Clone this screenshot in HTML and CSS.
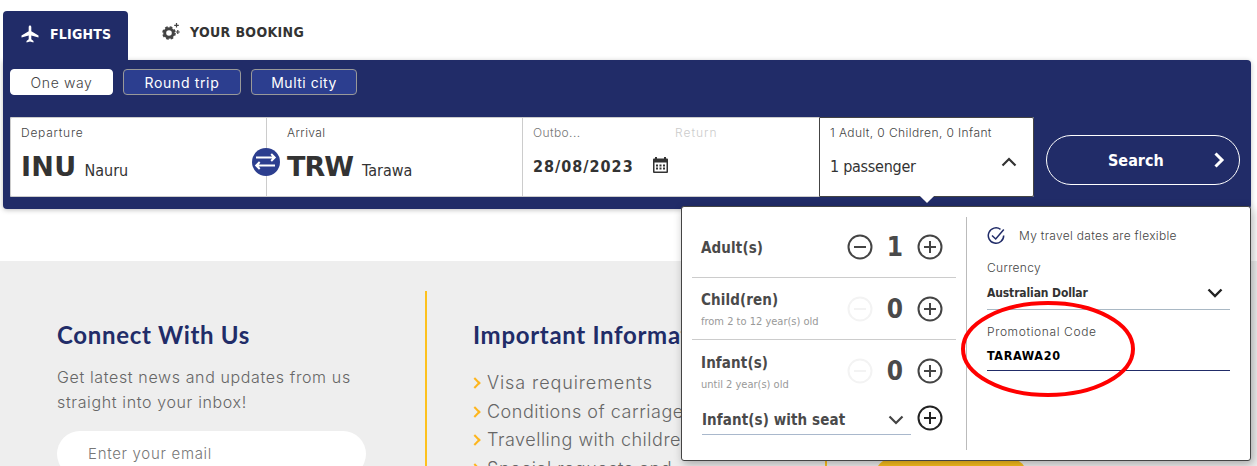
FILE: index.html
```html
<!DOCTYPE html>
<html lang="en">
<head>
    <meta charset="UTF-8">
    <meta name="viewport" content="width=device-width, initial-scale=1.0">
    <title>Book Flights</title>
    <link rel="stylesheet" href="styles.css">
</head>
<body>
    <!-- Booking widget -->
    <div class="booking">
        <nav class="tabs">
            <a class="tab active" href="#flights">
                <svg width="18" height="18" viewBox="0 0 18 18"><path d="M9 .5c.8 0 1.300.7 1.300 1.500V6.300L17.500 10.500v2L10.300 10.500V14.200l2.200 1.700V17.500L9 16.400l-3.500 1.100V15.900l2.200-1.700V10.500L.5 12.500v-2L7.700 6.300V2C7.700 1.200 8.200.5 9 .5z" fill="#fff"/></svg>
                <span>FLIGHTS</span>
            </a>
            <a class="tab" href="#booking">
                <svg width="19" height="18" viewBox="0 0 19 18">
                    <circle cx="7" cy="10" r="4.300" fill="none" stroke="#444" stroke-width="3"/>
                    <circle cx="7" cy="10" r="6" fill="none" stroke="#444" stroke-width="1.600" stroke-dasharray="2.700 2.012"/>
                    <path d="M14.500 0v4.500M12.200 2.300h4.600M15.800 7v4M13.800 9h4" stroke="#444" stroke-width="1.200"/>
                </svg>
                <span class="your-booking">YOUR BOOKING</span>
            </a>
        </nav>

        <div class="panel">
            <div class="trip-types">
                <button class="trip selected">One way</button>
                <button class="trip round">Round trip</button>
                <button class="trip multi">Multi city</button>
            </div>

            <div class="search-row">
                <div class="fields">
                    <div class="field departure">
                        <div class="label"><span class="from">Departure</span></div>
                        <div class="place"><b>INU</b><span>Nauru</span></div>
                        <div class="swap">
                            <svg width="28" height="28" viewBox="0 0 28 28" fill="none" stroke="#fff" stroke-width="2">
                                <path d="M4 9.500h18M19.200 6l3.500 3.500-3.500 3.500M23 17.500H5M7.700 14l-3.500 3.500L7.700 21"/>
                            </svg>
                        </div>
                    </div>
                    <div class="field arrival">
                        <div class="label"><span>Arrival</span></div>
                        <div class="place"><b class="trw">TRW</b><span>Tarawa</span></div>
                    </div>
                    <div class="field dates">
                        <div class="label"><span class="outbound">Outbo...</span><span class="return">Return</span></div>
                        <div class="date">
                            <span>28/08/2023</span>
                            <svg width="15" height="16" viewBox="0 0 15 16">
                                <path d="M0 2.500Q0 1.500 1 1.500H2V0H4V1.500H11V0H13V1.500H14Q15 1.500 15 2.500V15Q15 16 14 16H1Q0 16 0 15zM1.500 5.500V14.500H13.500V5.500z" fill="#333" fill-rule="evenodd"/>
                                <path d="M3 8.500h9M3 11.500h9" stroke="#333" stroke-width="2" stroke-dasharray="2 1.500"/>
                            </svg>
                        </div>
                    </div>
                    <div class="field passengers">
                        <div class="label"><span class="counts">1 Adult, 0 Children, 0 Infant</span></div>
                        <div class="total">
                            <span>1 passenger</span>
                            <svg width="16" height="10" viewBox="0 0 16 10"><path d="M1.500 8.500L8 2l6.500 6.500" fill="none" stroke="#333" stroke-width="2.200"/></svg>
                        </div>
                        <span class="pointer"></span>
                    </div>
                </div>
                <button class="search">
                    <span>Search</span>
                    <svg width="11" height="16" viewBox="0 0 11 16"><path d="M1.500 1.500L8 8l-6.500 6.500" fill="none" stroke="#fff" stroke-width="3"/></svg>
                </button>
            </div>
        </div>

        <!-- Passenger and options dropdown -->
        <div class="dropdown">
            <div class="guests">
                <div class="guest adult">
                    <div class="who"><b>Adult(s)</b></div>
                    <svg class="circle" viewBox="0 0 26 26"><circle cx="13" cy="13" r="11.500"/><path d="M7 13h12"/></svg>
                    <strong>1</strong>
                    <svg class="circle" viewBox="0 0 26 26"><circle cx="13" cy="13" r="11.500"/><path d="M7 13h12M13 7v12"/></svg>
                </div>
                <div class="guest">
                    <div class="who"><b>Child(ren)</b><small>from 2 to 12 year(s) old</small></div>
                    <svg class="circle off" viewBox="0 0 26 26"><circle cx="13" cy="13" r="11.500"/><path d="M7 13h12"/></svg>
                    <strong>0</strong>
                    <svg class="circle" viewBox="0 0 26 26"><circle cx="13" cy="13" r="11.500"/><path d="M7 13h12M13 7v12"/></svg>
                </div>
                <div class="guest infant">
                    <div class="who"><b>Infant(s)</b><small>until 2 year(s) old</small></div>
                    <svg class="circle off" viewBox="0 0 26 26"><circle cx="13" cy="13" r="11.500"/><path d="M7 13h12"/></svg>
                    <strong>0</strong>
                    <svg class="circle" viewBox="0 0 26 26"><circle cx="13" cy="13" r="11.500"/><path d="M7 13h12M13 7v12"/></svg>
                </div>
                <div class="seat">
                    <div class="seat-select">
                        <b>Infant(s) with seat</b>
                        <svg width="16" height="10" viewBox="0 0 16 10"><path d="M1.500 1.500L8 8l6.500-6.500" fill="none" stroke="#444" stroke-width="2.200"/></svg>
                    </div>
                    <svg class="circle dark" viewBox="0 0 26 26"><circle cx="13" cy="13" r="11.500"/><path d="M7 13h12M13 7v12"/></svg>
                </div>
            </div>
            <div class="options">
                <div class="flexible">
                    <svg width="18" height="18" viewBox="0 0 18 18" fill="none" stroke="#212c68" stroke-width="1.500"><path d="M13.500 2.300A7.700 7.700 0 1 0 16.700 8.500M5 8.500l3.700 3.500L16.800 2.500"/></svg>
                    <span>My travel dates are flexible</span>
                </div>
                <div class="option-label currency">Currency</div>
                <div class="currency-select">
                    <b>Australian Dollar</b>
                    <svg width="16" height="10" viewBox="0 0 16 10"><path d="M1.500 1.500L8 8l6.500-6.500" fill="none" stroke="#222" stroke-width="2.400"/></svg>
                </div>
                <div class="option-label promo">Promotional Code</div>
                <div class="promo-code">TARAWA20</div>
            </div>
            <svg class="highlight" width="176" height="98" viewBox="0 0 176 98"><ellipse cx="88" cy="49" rx="85" ry="46" fill="none" stroke="#f00" stroke-width="4"/></svg>
        </div>
    </div>

    <!-- Footer -->
    <footer>
        <div class="col connect">
            <h3>Connect With Us</h3>
            <p>Get latest news and updates from us<br>straight into your inbox!</p>
            <div class="email">Enter your email</div>
        </div>
        <div class="col info">
            <h3>Important Information</h3>
            <ul>
                <li class="visa">Visa requirements</li>
                <li>Conditions of carriage</li>
                <li>Travelling with children</li>
                <li>Special requests and</li>
            </ul>
        </div>
        <div class="col last">
            <div class="yellow-btn"></div>
        </div>
    </footer>
</body>
</html>
```
FILE: styles.css
```css
* {
    box-sizing: border-box;
}

body {
    margin: 0;
    height: 466px;
    overflow: hidden;
    background: #fff;
    font-family: Inter, sans-serif;
    color: #333;
}

button {
    font-family: inherit;
    padding: 0;
}

svg {
    display: block;
    flex: none;
}

span, b, small {
    white-space: nowrap;
}

/* Booking widget */
.booking {
    position: relative;
    margin: 0 6px 0 3px;
    padding-top: 11px;
    height: 261px;
}

.tabs {
    display: flex;
    height: 49px;
    font: bold 14px/18px "DejaVu Sans Condensed", "DejaVu Sans", sans-serif;
}

.tab {
    display: flex;
    color: #333;
    text-decoration: none;
    padding: 12px 0 0 34px;
}

.tab.active {
    width: 125px;
    padding: 14px 0 0 18px;
    background: #212c68;
    color: #fff;
    border-radius: 4px 4px 0 0;
}

.tab span {
    margin-left: 11px;
    letter-spacing: 0.2px;
}

.tab .your-booking {
    margin-left: 9px;
    letter-spacing: 0.35px;
}

.panel {
    height: 149px;
    padding: 9px 11px 0 7px;
    background: #212c68;
    border-radius: 0 4px 4px 4px;
    box-shadow: 0 1px 5px rgba(0, 0, 0, 0.25);
}

.trip-types {
    display: flex;
    gap: 10px;
    margin-bottom: 22px;
}

.trip {
    width: 106px;
    height: 26px;
    border: 1px solid #999;
    border-radius: 4px;
    background: #2c3e8f;
    color: #fff;
    font-size: 14px;
    letter-spacing: 0.5px;
}

.trip.selected {
    width: 103px;
    border-color: #fff;
    background: #fff;
    color: #444;
    font-weight: 300;
    letter-spacing: 0.6px;
}

.trip.round {
    width: 118px;
    letter-spacing: 0.65px;
}

.search-row {
    display: flex;
    justify-content: space-between;
}

.fields {
    display: flex;
    width: 1024px;
    height: 80px;
    background: #fff;
    border-radius: 2px;
}

.field {
    position: relative;
    padding: 7px 0 0 10px;
    border: solid #ccc;
    border-width: 1px 0 1px 1px;
}

.departure {
    width: 256px;
    border-radius: 2px 0 0 2px;
}

.arrival {
    width: 256px;
    padding-left: 20px;
}

.dates {
    width: 297px;
}

.passengers {
    width: 215px;
    border: 1px solid #444;
    border-radius: 0 2px 2px 0;
}

.label {
    display: flex;
    height: 16px;
    font-size: 12px;
    line-height: 16px;
    font-weight: 300;
    letter-spacing: 0.4px;
    color: #444;
}

.from {
    letter-spacing: 0.75px;
}

.outbound {
    width: 142px;
    color: #777;
}

.return {
    color: #ccc;
    letter-spacing: 1px;
}

.place {
    display: flex;
    align-items: baseline;
    margin-top: 8px;
    font: 16px/36px "DejaVu Sans Condensed", "DejaVu Sans", sans-serif;
}

.place b {
    font-family: "DejaVu Sans", sans-serif;
    font-size: 27px;
    margin-right: 8px;
    letter-spacing: 0.3px;
}

.place .trw {
    letter-spacing: -1px;
    margin-right: 9px;
}

.swap {
    position: absolute;
    right: -14px;
    top: 30px;
    z-index: 1;
    width: 28px;
    height: 28px;
    border-radius: 50%;
    background: #2c3e8f;
}

.date, .total {
    display: flex;
    margin-top: 16px;
    font: 16px/20px "DejaVu Sans Condensed", "DejaVu Sans", sans-serif;
}

.date {
    font-weight: bold;
}

.date span {
    letter-spacing: 1px;
}

.date svg {
    margin: 0 0 0 19px;
}

.total {
    justify-content: space-between;
    padding-right: 16px;
    letter-spacing: -0.27px;
}

.pointer {
    position: absolute;
    left: 102px;
    bottom: -5px;
    width: 10px;
    height: 10px;
    background: #fff;
    transform: rotate(45deg);
}

.search {
    display: flex;
    align-items: center;
    width: 194px;
    height: 50px;
    margin-top: 18px;
    padding: 0 14px 0 61px;
    justify-content: space-between;
    border: 1px solid #fff;
    border-radius: 25px;
    background: none;
    color: #fff;
    font: bold 16px "DejaVu Sans Condensed", "DejaVu Sans", sans-serif;
}

/* Dropdown */
.dropdown {
    position: absolute;
    left: 678px;
    top: 206px;
    z-index: 2;
    display: flex;
    width: 570px;
    height: 255px;
    padding: 10px 20px 10px 10px;
    border: 1px solid #444;
    border-radius: 3px;
    background: #fff;
    box-shadow: 2px 3px 10px rgba(0, 0, 0, 0.3);
    font-family: "DejaVu Sans Condensed", "DejaVu Sans", sans-serif;
    color: #4a4a4a;
}

.guests {
    width: 275px;
    padding-right: 10px;
    border-right: 1px solid #bbb;
}

.guest {
    display: flex;
    align-items: center;
    height: 62px;
    padding: 0 13px 0 9px;
    border-bottom: 1px solid #ccc;
}

.guest.adult {
    height: 61px;
}

.guest.infant {
    border-bottom: 0;
}

.who {
    flex: 1;
    padding-top: 1px;
    font-size: 15px;
    line-height: 20px;
    letter-spacing: 0.12px;
}

.who small {
    display: block;
    margin-top: 5px;
    font-size: 11px;
    line-height: 14px;
    letter-spacing: 0;
    color: #999;
}

.infant .who {
    padding-top: 3px;
}

.guest strong {
    width: 44px;
    text-align: center;
    font-size: 26px;
}

.circle {
    width: 26px;
    height: 26px;
    fill: none;
    stroke: #444;
    stroke-width: 2;
}

.circle.off {
    stroke: #f3f3f3;
}

.circle.dark {
    stroke: #222;
}

.seat {
    display: flex;
    padding: 3px 13px 0 10px;
    justify-content: space-between;
}

.seat-select {
    display: flex;
    justify-content: space-between;
    align-items: center;
    width: 209px;
    height: 30px;
    padding-right: 7px;
    border-bottom: 1px solid #a9b8cc;
    font-size: 15px;
    letter-spacing: 0.1px;
}

.options {
    width: 243px;
    margin-left: 20px;
}

.flexible {
    display: flex;
    align-items: center;
    height: 38px;
}

.flexible span, .option-label {
    font: 300 12px/16px Inter, sans-serif;
    letter-spacing: 0.3px;
    color: #444;
}

.flexible span {
    margin-left: 14px;
}

.currency {
    margin-top: 5px;
}

.currency-select {
    display: flex;
    justify-content: space-between;
    align-items: center;
    height: 34px;
    padding-right: 7px;
    border-bottom: 1px solid #a9b8c4;
    font-size: 12px;
    letter-spacing: -0.12px;
    color: #333;
}

.promo {
    margin-top: 14px;
    letter-spacing: 0.62px;
}

.promo-code {
    height: 31px;
    border-bottom: 1px solid #212c68;
    font-size: 12.500px;
    line-height: 16px;
    padding-top: 8px;
    font-weight: bold;
    letter-spacing: 0.65px;
    color: #000;
}

.highlight {
    position: absolute;
    left: 278px;
    top: 93px;
}

/* Footer */
footer {
    display: flex;
    height: 205px;
    padding-top: 30px;
    overflow: hidden;
    background: #eee;
}

.col {
    border-left: 2px solid #fdc11d;
    padding: 0 0 0 46px;
}

.connect {
    width: 425px;
    padding-left: 57px;
    border: 0;
}

.info {
    width: 400px;
}

h3 {
    margin: 28px 0 0;
    font: bold 24px/32px Lato, sans-serif;
    letter-spacing: 0.68px;
    color: #212c68;
    white-space: nowrap;
}

.connect p {
    margin: 14px 0 0;
    font-size: 16px;
    font-weight: 300;
    line-height: 25px;
    letter-spacing: 0.63px;
    color: #666;
}

.email {
    width: 309px;
    height: 46px;
    margin-top: 16px;
    padding-left: 31px;
    border-radius: 23px;
    background: #fff;
    font-size: 15px;
    font-weight: 300;
    line-height: 46px;
    letter-spacing: 0.7px;
    color: #777;
}

.info ul {
    margin: 18px 0 0;
    padding: 0;
    list-style: none;
    font-size: 18px;
    font-weight: 300;
    line-height: 28.500px;
    letter-spacing: 0.52px;
    color: #666;
}

.info li {
    position: relative;
    padding-left: 14px;
}

.info .visa {
    letter-spacing: 0.9px;
}

.info li::before {
    content: "";
    position: absolute;
    left: -2px;
    top: 10px;
    width: 6px;
    height: 6px;
    border: solid #fdb51d;
    border-width: 2px 2px 0 0;
    transform: rotate(45deg);
}

.yellow-btn {
    width: 152px;
    height: 40px;
    margin: 167px 0 0 2px;
    border-radius: 18px;
    background: #fdc11d;
}
```
